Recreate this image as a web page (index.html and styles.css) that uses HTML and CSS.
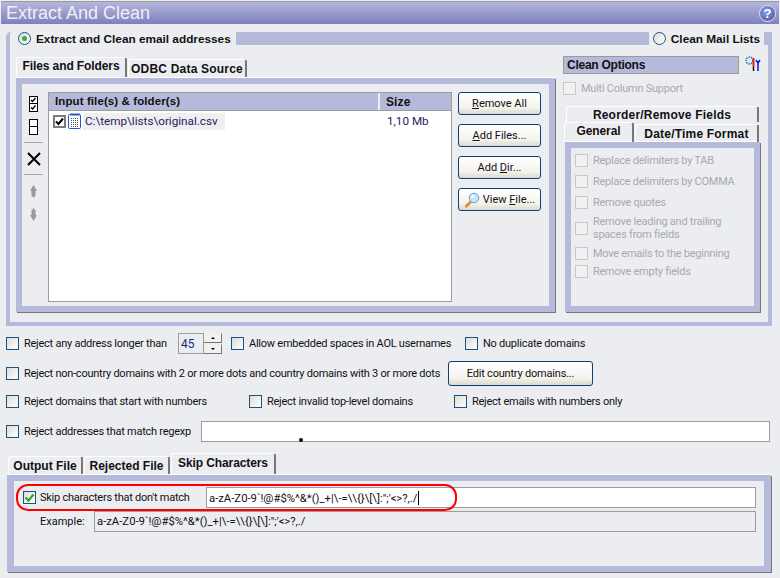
FILE: index.html
```html
<!DOCTYPE html>
<html lang="en">
<head>
    <meta charset="UTF-8">
    <title>Extract And Clean</title>
    <link rel="stylesheet" href="styles.css">
</head>
<body>
    <div class="titlebar">
        <span class="title">Extract And Clean</span>
        <span class="help">?</span>
    </div>

    <div class="group">
        <div class="group-head">
            <span class="radio checked"></span>
            <span class="head-label">Extract and Clean email addresses</span>
            <span class="head-bar"></span>
            <span class="radio"></span>
            <span class="head-label">Clean Mail Lists</span>
            <span class="head-corner"></span>
        </div>
        <div class="group-body">
            <div class="left-col">
                <div class="tabs">
                    <div class="tab active files-tab">Files and Folders</div>
                    <div class="tab odbc-tab">ODBC Data Source</div>
                </div>
                <div class="panel files-panel">
                    <div class="toolbar">
                        <svg class="tool check-all" width="9" height="16" viewBox="0 0 9 16">
                            <rect x="0.5" y="0.5" width="8" height="7" fill="#fff" stroke="#000"/>
                            <rect x="0.5" y="7.5" width="8" height="8" fill="#fff" stroke="#000"/>
                            <path d="M2 4l1.500 1.500L6.500 2M2 11.500L3.500 13l3-3.500" fill="none" stroke="#000" stroke-width="1.400"/>
                        </svg>
                        <svg class="tool uncheck-all" width="9" height="16" viewBox="0 0 9 16">
                            <rect x="0.5" y="0.5" width="8" height="7" fill="#fff" stroke="#000"/>
                            <rect x="0.5" y="7.500" width="8" height="8" fill="#fff" stroke="#000"/>
                        </svg>
                        <span class="tool-sep sep-one"></span>
                        <svg class="tool remove-x" width="14" height="14" viewBox="0 0 14 14">
                            <path d="M1 1l12 12M13 1L1 13" stroke="#000" stroke-width="2"/>
                        </svg>
                        <span class="tool-sep sep-two"></span>
                        <svg class="tool arrow-up" width="9" height="13" viewBox="0 0 9 13">
                            <path d="M4.500 0L8 6H6.500v5.500h-4V6H1z M4 11h1v2H4z" fill="#9a9a9a"/>
                        </svg>
                        <svg class="tool arrow-down" width="9" height="13" viewBox="0 0 9 13">
                            <path d="M4 0h1v2H4z M2.500 1.500h4V7H8l-3.500 6L1 7h1.500z" fill="#9a9a9a"/>
                        </svg>
                    </div>
                    <div class="file-list">
                        <div class="list-head">
                            <div class="col-name">Input file(s) &amp; folder(s)</div>
                            <div class="col-size">Size</div>
                        </div>
                        <div class="file-row">
                            <span class="file-check">
                                <svg width="9" height="9" viewBox="0 0 9 9"><path d="M1 4.500L3.500 7 8 1.500" fill="none" stroke="#000" stroke-width="2"/></svg>
                            </span>
                            <svg class="file-icon" width="13" height="16" viewBox="0 0 13 16">
                                <rect x="0.5" y="1.500" width="12" height="14" rx="1" fill="#fff" stroke="#2a56c6"/>
                                <path d="M3 0v3M5 0v3M7 0v3M9 0v3M11 0v3" stroke="#2a56c6"/>
                                <path d="M3 5.500h7M3 7.500h7M3 9.500h7M3 11.500h7M3 13.500h7" stroke="#555" stroke-dasharray="1 1"/>
                            </svg>
                            <span class="file-name">C:\temp\lists\original.csv</span>
                            <span class="file-size">1,10 Mb</span>
                        </div>
                    </div>
                    <div class="file-buttons">
                        <button class="btn"><span><u>R</u>emove All</span></button>
                        <button class="btn"><span><u>A</u>dd Files...</span></button>
                        <button class="btn"><span>Add <u>D</u>ir...</span></button>
                        <button class="btn view-btn">
                            <svg width="16" height="16" viewBox="0 0 16 16">
                                <path d="M7 9.500L1.500 15" stroke="#e08a2c" stroke-width="2.600"/>
                                <circle cx="10" cy="6" r="4.800" fill="#bfe6fb" stroke="#7d9cc0"/>
                                <circle cx="9" cy="4.800" r="1.800" fill="#eefaff"/>
                            </svg>
                            <span>View <u>F</u>ile...</span>
                        </button>
                    </div>
                </div>
            </div>
            <div class="right-col">
                <div class="clean-head">
                    <div class="clean-title">Clean Options</div>
                    <svg class="clean-icon" width="17" height="17" viewBox="0 0 17 17">
                        <circle cx="5.500" cy="5.500" r="3.500" fill="#dfe8f8" stroke="#2f6f9f" stroke-width="1.500" stroke-dasharray="1.500 1"/>
                        <path d="M9.500 3v9" stroke="#e0202a" stroke-width="2"/>
                        <path d="M9.500 12v4" stroke="#111" stroke-width="1.500"/>
                        <path d="M12 5l2 3 2-3M14 8v8" fill="none" stroke="#1420e0" stroke-width="1.600"/>
                    </svg>
                </div>
                <div class="opt opt-disabled multi-col"><span class="cb"></span>Multi Column Support</div>
                <div class="tabs-top">
                    <div class="tab reorder-tab">Reorder/Remove Fields</div>
                </div>
                <div class="tabs-second">
                    <div class="tab active general-tab">General</div>
                    <div class="tab date-tab">Date/Time Format</div>
                </div>
                <div class="panel clean-panel">
                    <div class="opt opt-disabled clean-a"><span class="cb"></span>Replace delimiters by TAB</div>
                    <div class="opt opt-disabled clean-b"><span class="cb"></span>Replace delimiters by COMMA</div>
                    <div class="opt opt-disabled clean-b"><span class="cb"></span>Remove quotes</div>
                    <div class="opt opt-disabled clean-c"><span class="cb"></span><span>Remove leading and trailing<br>spaces from fields</span></div>
                    <div class="opt opt-disabled clean-d"><span class="cb"></span>Move emails to the beginning</div>
                    <div class="opt opt-disabled clean-e"><span class="cb"></span>Remove empty fields</div>
                </div>
            </div>
        </div>
    </div>

    <div class="row row-one">
        <div class="opt longer-opt"><span class="cb"></span>Reject any address longer than</div>
        <div class="spin">
            <div class="spin-value">45</div>
            <div class="spin-btns">
                <span class="spin-btn"><i class="tri-up"></i></span>
                <span class="spin-btn"><i class="tri-down"></i></span>
            </div>
        </div>
        <div class="opt aol-opt"><span class="cb"></span>Allow embedded spaces in AOL usernames</div>
        <div class="opt"><span class="cb"></span>No duplicate domains</div>
    </div>
    <div class="row row-two">
        <div class="opt dots-opt"><span class="cb"></span>Reject non-country domains with 2 or more dots and country domains with 3 or more dots</div>
        <button class="btn edit-btn"><span>Edit country domains...</span></button>
    </div>
    <div class="row row-three">
        <div class="opt start-opt"><span class="cb"></span>Reject domains that start with numbers</div>
        <div class="opt tld-opt"><span class="cb"></span>Reject invalid top-level domains</div>
        <div class="opt"><span class="cb"></span>Reject emails with numbers only</div>
    </div>
    <div class="row row-four">
        <div class="opt regexp-opt"><span class="cb"></span>Reject addresses that match regexp</div>
        <div class="field regexp-field"><span class="field-dot"></span></div>
    </div>

    <div class="tabs bottom-tabs">
        <div class="tab output-tab">Output File</div>
        <div class="tab rejected-tab">Rejected File</div>
        <div class="tab active skip-tab">Skip Characters</div>
    </div>
    <div class="panel skip-panel">
        <div class="skip-row">
            <div class="opt skip-opt">
                <span class="cb">
                    <svg width="11" height="11" viewBox="0 0 11 11"><path d="M1.500 5.500L4.500 8.500 9.500 2.500" fill="none" stroke="#2fa52f" stroke-width="2.200"/></svg>
                </span>Skip characters that don't match
            </div>
            <div class="field skip-field">a-zA-Z0-9`!@#$%^&amp;*()_+|\-=\\{}\[\]:";'&lt;&gt;?,./<span class="caret"></span></div>
        </div>
        <div class="example-row">
            <div class="example-label">Example:</div>
            <div class="field example-field">a-zA-Z0-9`!@#$%^&amp;*()_+|\-=\\{}\[\]:";'&lt;&gt;?,./</div>
        </div>
        <div class="red-mark"></div>
    </div>
</body>
</html>
```

FILE: styles.css
```css
* {
    box-sizing: border-box;
}
html, body {
    margin: 0;
    height: 578px;
    overflow: hidden;
}
body {
    font-family: Roboto, "Liberation Sans", sans-serif;
    font-size: 11px;
    color: #111;
    background-color: #ecedf1;
}

/* title */
.titlebar {
    display: flex;
    align-items: center;
    justify-content: space-between;
    height: 23px;
    margin: 1px 1px 0;
    padding: 0 3px 0 5px;
    border-top: 1px solid #9a9a9a;
    background: linear-gradient(#b6b6dc, #7d80bb);
}
.title {
    font-family: "Liberation Sans", sans-serif;
    font-size: 18px;
    color: #eef0f8;
}
.help {
    display: flex;
    align-items: center;
    justify-content: center;
    width: 17px;
    height: 17px;
    border-radius: 50%;
    border: 1px solid #e4e6f4;
    background: radial-gradient(circle at 40% 35%, #8f9fe0, #3f4fa6);
    color: #fff;
    font-family: "Liberation Sans", sans-serif;
    font-size: 13px;
    font-weight: bold;
}

/* main group */
.group {
    width: 766px;
    height: 294px;
    margin: 8px 0 0 6px;
    border: 4px solid #b5b9da;
    border-top: none;
    border-top-left-radius: 5px;
}
.group-head {
    display: flex;
    align-items: center;
    height: 13px;
    padding-left: 8px;
    font-family: "Liberation Sans", sans-serif;
    font-weight: bold;
    font-size: 11.8px;
}
.head-label {
    margin-left: 5px;
    white-space: nowrap;
}
.head-bar {
    flex: 1;
    height: 13px;
    margin: 0 4px 0 5px;
    background-color: #b5b9da;
}
.head-corner {
    width: 4px;
    height: 13px;
    margin-left: 4px;
    background-color: #b5b9da;
}
.radio {
    display: flex;
    align-items: center;
    justify-content: center;
    flex: none;
    width: 13px;
    height: 13px;
    border-radius: 50%;
    border: 1px solid #1c5180;
    background: linear-gradient(135deg, #dcdcd8, #fff);
}
.radio.checked::after {
    content: "";
    width: 5px;
    height: 5px;
    border-radius: 50%;
    background-color: #2fb24a;
}
.group-body {
    display: flex;
    padding: 12px 0 0 6px;
}
.left-col {
    width: 540px;
}
.right-col {
    width: 198px;
    margin: -1px 0 0 7px;
}

/* tabs */
.tabs, .tabs-top, .tabs-second {
    display: flex;
    align-items: flex-end;
    height: 20px;
    font-family: "Liberation Sans", sans-serif;
    font-weight: bold;
    font-size: 12px;
}
.tab {
    display: flex;
    align-items: center;
    justify-content: center;
    height: 18px;
    margin-right: 1px;
    border-top: 1px solid #fff;
    border-left: 1px solid #fff;
    border-right: 2px solid #777;
    border-top-left-radius: 3px;
    border-top-right-radius: 3px;
    letter-spacing: 0.2px;
    white-space: nowrap;
}
.tab.active {
    height: 20px;
    padding-bottom: 3px;
    letter-spacing: -0.1px;
}
.files-tab {
    width: 111px;
}
.odbc-tab {
    width: 119px;
}
.panel {
    border: 6px solid #b5b9da;
    box-shadow: 1px 1px 0 #777, 0 -1px 0 #fff;
}

/* files panel */
.files-panel {
    display: flex;
    width: 539px;
    height: 234px;
    margin-top: 1px;
    padding-top: 8px;
}
.toolbar {
    display: flex;
    flex-direction: column;
    align-items: center;
    flex: none;
    width: 26px;
}
.tool {
    display: block;
    margin-left: -3px;
}
.check-all {
    margin-top: 4px;
}
.uncheck-all {
    margin-top: 7px;
}
.tool-sep {
    width: 19px;
    height: 1px;
    margin-left: -3px;
    background-color: #aaa;
}
.sep-one {
    margin-top: 7px;
}
.remove-x {
    margin-top: 9px;
}
.sep-two {
    margin-top: 8px;
}
.arrow-up {
    margin-top: 10px;
}
.arrow-down {
    margin-top: 10px;
}
.file-list {
    flex: none;
    width: 404px;
    height: 210px;
    border: 1px solid #9c9c9c;
    background-color: #fff;
}
.list-head {
    display: flex;
    height: 18px;
    background-color: #b5b9da;
    border-bottom: 1px solid #9c9c9c;
    font-family: "Liberation Sans", sans-serif;
    font-weight: bold;
    font-size: 11.5px;
    letter-spacing: 0.1px;
}
.col-name {
    width: 331px;
    padding: 2px 0 0 6px;
    border-right: 2px solid #eee;
}
.col-size {
    padding: 2px 0 0 6px;
    font-size: 12px;
}
.file-row {
    display: flex;
    align-items: center;
    height: 20px;
    padding-left: 4px;
    font-size: 11.7px;
}
.file-check {
    display: flex;
    align-items: center;
    justify-content: center;
    flex: none;
    width: 13px;
    height: 13px;
    border: 2px solid #7c7c7c;
}
.file-icon {
    margin-left: 2px;
}
.file-name {
    width: 142px;
    height: 17px;
    margin-left: 2px;
    padding: 1px 0 0 2px;
    background-color: #efefef;
    color: #26206a;
    line-height: 15px;
}
.file-size {
    margin-left: 162px;
    color: #26206a;
}
.file-buttons {
    display: flex;
    flex-direction: column;
    gap: 9px;
    margin-left: 6px;
}
.btn {
    display: flex;
    align-items: center;
    justify-content: center;
    gap: 3px;
    width: 83px;
    height: 23px;
    padding: 0;
    border: 1px solid #0f3f78;
    border-radius: 3px;
    background: linear-gradient(#fff, #f4f3ee 70%, #dcd8cc);
    font-family: inherit;
    font-size: 11px;
    color: #111;
}

/* clean options */
.clean-head {
    display: flex;
    align-items: center;
    height: 18px;
}
.clean-title {
    width: 176px;
    height: 18px;
    padding: 1px 0 0 3px;
    border: 1px solid #9c9c9c;
    background-color: #b5b9da;
    font-family: "Liberation Sans", sans-serif;
    font-weight: bold;
    font-size: 12px;
    letter-spacing: -0.25px;
}
.clean-icon {
    margin: -3px 0 0 5px;
}
.opt {
    display: flex;
    align-items: center;
    gap: 5px;
    letter-spacing: -0.25px;
    white-space: nowrap;
}
.opt-disabled {
    color: #a9a9ad;
}
.cb {
    display: flex;
    align-items: center;
    justify-content: center;
    flex: none;
    width: 13px;
    height: 13px;
    border: 1px solid #1c5180;
    background: linear-gradient(135deg, #dcdcd8, #fff);
}
.opt-disabled .cb {
    border-color: #cac8c0;
    background: #f1f1f3;
}
.multi-col {
    height: 13px;
    margin-top: 8px;
}
.tabs-top {
    height: 16px;
    margin: 11px 0 0 3px;
}
.reorder-tab {
    width: 193px;
    height: 16px;
}
.tabs-second {
    margin-left: 1px;
}
.general-tab {
    width: 70px;
}
.date-tab {
    width: 124px;
}
.clean-panel {
    width: 195px;
    height: 170px;
    margin-left: 2px;
    padding: 6px 0 0 4px;
}
.clean-panel .opt {
    height: 13px;
}
.clean-b {
    margin-top: 8px;
}
.clean-panel .clean-c {
    height: 26px;
    margin-top: 6px;
    line-height: 13px;
}
.clean-d {
    margin-top: 6px;
}
.clean-e {
    margin-top: 5px;
}

/* option rows */
.row {
    display: flex;
    align-items: center;
    padding-left: 6px;
}
.row-one {
    height: 21px;
    margin-top: 7px;
}
.longer-opt {
    width: 172px;
}
.spin {
    display: flex;
    height: 21px;
}
.spin-value {
    width: 26px;
    padding: 3px 0 0 2px;
    border: 1px solid #9c9c9c;
    font-size: 12px;
    color: #1a2a80;
}
.spin-btns {
    display: flex;
    flex-direction: column;
    gap: 1px;
}
.spin-btn {
    display: flex;
    align-items: center;
    justify-content: center;
    width: 18px;
    height: 10px;
    border-top: 1px solid #eee;
    border-right: 1px solid #777;
    border-bottom: 1px solid #777;
    background-color: #f1f1ee;
}
.tri-up, .tri-down {
    width: 0;
    height: 0;
    border-left: 2px solid transparent;
    border-right: 2px solid transparent;
}
.tri-up {
    border-bottom: 2px solid #000;
}
.tri-down {
    border-top: 2px solid #000;
}
.aol-opt {
    width: 234px;
    margin-left: 9px;
}
.row-two {
    height: 25px;
    margin-top: 7px;
}
.dots-opt {
    width: 442px;
}
.edit-btn {
    width: 145px;
    height: 25px;
    letter-spacing: -0.2px;
}
.row-three {
    height: 13px;
    margin-top: 9px;
}
.start-opt {
    width: 243px;
}
.tld-opt {
    width: 205px;
}
.row-four {
    height: 21px;
    margin-top: 13px;
}
.regexp-opt {
    width: 195px;
}
.field {
    height: 21px;
    border: 1px solid #9c9c9c;
    background-color: #fff;
}
.regexp-field {
    position: relative;
    width: 569px;
}
.field-dot {
    position: absolute;
    left: 97px;
    bottom: -1px;
    width: 4px;
    height: 4px;
    border-radius: 50%;
    background-color: #000;
}

/* bottom tabs */
.bottom-tabs {
    height: 21px;
    margin: 11px 0 0 8px;
}
.output-tab {
    width: 75px;
}
.rejected-tab {
    width: 86px;
}
.output-tab, .rejected-tab {
    letter-spacing: 0;
}
.skip-tab {
    width: 105px;
}
.tab.skip-tab {
    height: 21px;
}
.skip-panel {
    position: relative;
    width: 764px;
    height: 97px;
    margin: 1px 0 0 7px;
    border-width: 6px 7px;
}
.skip-row {
    display: flex;
    align-items: center;
    height: 21px;
    margin-top: 6px;
    padding-left: 9px;
}
.skip-opt {
    gap: 4px;
    width: 183px;
}
.skip-field {
    width: 550px;
    padding: 3px 0 0 2px;
    font-size: 11.3px;
}
.caret {
    display: inline-block;
    width: 1px;
    height: 14px;
    margin-left: 1px;
    vertical-align: -3px;
    background-color: #000;
}
.example-row {
    display: flex;
    align-items: center;
    height: 21px;
    margin-top: 3px;
    padding-left: 26px;
}
.example-label {
    width: 54px;
}
.example-field {
    width: 662px;
    padding: 3px 0 0 2px;
    background-color: transparent;
    font-size: 11.3px;
}
.red-mark {
    position: absolute;
    left: 2px;
    top: 3px;
    width: 441px;
    height: 27px;
    border: 2px solid #f00;
    border-radius: 12px;
}
```
